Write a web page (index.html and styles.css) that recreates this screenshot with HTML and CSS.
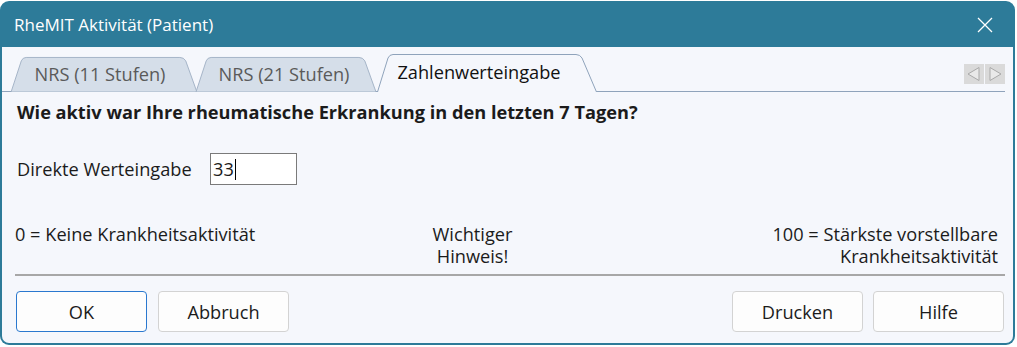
FILE: index.html
```html
<html>
  <head>
    <meta charset="utf-8" />
    <link rel="stylesheet" href="styles.css">
  </head>
  <body>
    <div class="window">
      <div class="titlebar">
        <span class="title">RheMIT Aktivität (Patient)</span>
        <svg class="close" width="16" height="16" viewBox="0 0 16 16">
          <path d="M1 1 L15 15 M15 1 L1 15" stroke="#ffffff" stroke-width="1.3" fill="none" />
        </svg>
      </div>
      <div class="client">
        <div class="tabstrip">
          <div class="tab tab-first">NRS (11 Stufen)</div>
          <div class="tab tab-second">NRS (21 Stufen)</div>
          <div class="tab tab-active">Zahlenwerteingabe</div>
          <div class="scrollers">
            <span class="scroll-btn">
              <svg width="20" height="20" viewBox="0 0 20 20">
                <path d="M15 3.5 L15 16.5 L4 10 Z" fill="#e9e9e9" stroke="#a9a9a9" stroke-width="1" />
              </svg>
            </span>
            <span class="scroll-btn">
              <svg width="20" height="20" viewBox="0 0 20 20">
                <path d="M5 3.5 L5 16.5 L16 10 Z" fill="#e9e9e9" stroke="#a9a9a9" stroke-width="1" />
              </svg>
            </span>
          </div>
        </div>

        <div class="question">Wie aktiv war Ihre rheumatische Erkrankung in den letzten 7 Tagen?</div>

        <div class="field-row">
          <span class="field-label">Direkte Werteingabe</span>
          <div class="field-box">33<span class="caret"></span></div>
        </div>

        <div class="scale">
          <div class="scale-min">0 = Keine Krankheitsaktivität</div>
          <div class="scale-note">Wichtiger<br />Hinweis!</div>
          <div class="scale-max">100 = Stärkste vorstellbare<br />Krankheitsaktivität</div>
        </div>

        <div class="separator"></div>

        <div class="buttons">
          <div class="left-buttons">
            <button class="btn btn-default">OK</button>
            <button class="btn">Abbruch</button>
          </div>
          <div class="right-buttons">
            <button class="btn">Drucken</button>
            <button class="btn">Hilfe</button>
          </div>
        </div>
      </div>
    </div>
  </body>
</html>
```

FILE: styles.css
```css
* {
  box-sizing: border-box;
}
body {
  margin: 0;
  background-color: #ffffff;
  font-family: "Open Sans", "Noto Sans", sans-serif;
  font-size: 18.2px;
  color: #1b1b1b;
}
.window {
  width: 1015px;
  height: 344px;
  margin-top: 1px;
  background-color: #2d7b99;
  border-radius: 9px;
  padding: 0 2px 2px 2px;
  display: flex;
  flex-direction: column;
}
.titlebar {
  height: 46px;
  display: flex;
  align-items: center;
  padding-left: 12px;
  padding-right: 20px;
  color: #ffffff;
}
.title {
  font-size: 17px;
  flex: 1;
}
.close {
  margin-top: 1px;
}
.client {
  flex: 1;
  background-color: #f5f7fc;
  border-radius: 0 0 7px 7px;
  display: flex;
  flex-direction: column;
}

/* tabs */
.tabstrip {
  margin-top: 6px;
  height: 39px;
  margin-right: 8px;
  display: flex;
  align-items: flex-end;
  border-bottom: 1px solid #8fa3bb;
  padding-left: 6px;
}
.tab {
  height: 36px;
  display: flex;
  align-items: center;
  justify-content: center;
  color: #5a5a5a;
  background-size: 100% 100%;
  background-repeat: no-repeat;
  margin-bottom: -1px;
}
.tab-first {
  width: 192px;
  background-image: url("data:image/svg+xml;utf8,<svg xmlns='http://www.w3.org/2000/svg' width='192' height='37' viewBox='0 0 192 37'><path d='M0.5 37 L11 5 Q12.5 1.5 16 1.5 L174 1.5 Q178 1.5 180 5 L191.5 37 Z' fill='%23d5dee9' stroke='%23a3b3c6' stroke-width='1'/></svg>");
  padding-right: 8px;
}
.tab-second {
  width: 186px;
  margin-left: -7px;
  background-image: url("data:image/svg+xml;utf8,<svg xmlns='http://www.w3.org/2000/svg' width='186' height='37' viewBox='0 0 186 37'><path d='M0.5 37 L11 5 Q12.5 1.5 16 1.5 L168 1.5 Q172 1.5 174 5 L185.5 37 Z' fill='%23d5dee9' stroke='%23a3b3c6' stroke-width='1'/></svg>");
  padding-right: 4px;
}
.tab-active {
  width: 220px;
  height: 39px;
  margin-left: -2px;
  color: #111111;
  background-image: url("data:image/svg+xml;utf8,<svg xmlns='http://www.w3.org/2000/svg' width='220' height='39' viewBox='0 0 220 39'><path d='M0.5 39 L11 5 Q12.5 1.5 16 1.5 L199 1.5 Q203 1.5 205 5 L219.5 39' fill='%23f5f7fc' stroke='%238fa3bb' stroke-width='1'/></svg>");
  padding-right: 16px;
  padding-bottom: 2px;
}
.scrollers {
  margin-left: auto;
  align-self: center;
  display: flex;
  gap: 1px;
  margin-top: 3px;
}
.scroll-btn {
  width: 20px;
  height: 20px;
  background-color: #dadada;
  display: block;
}
.scroll-btn svg {
  display: block;
}

/* body content */
.question {
  font-weight: bold;
  padding-left: 15px;
  margin-top: 10px;
  line-height: 20px;
}
.field-row {
  display: flex;
  align-items: center;
  padding-left: 15px;
  margin-top: 31px;
}
.field-label {
  width: 193px;
}
.field-box {
  width: 87px;
  height: 32px;
  border: 1px solid #7a7a7a;
  background-color: #ffffff;
  display: flex;
  align-items: center;
  padding-left: 2px;
}
.caret {
  width: 1px;
  height: 21px;
  background-color: #000000;
  margin-left: 1px;
}
.scale {
  display: grid;
  grid-template-columns: 415px 85px 1fr;
  margin-top: 38px;
  padding-left: 13px;
  padding-right: 15px;
  line-height: 22px;
}
.scale-note {
  text-align: center;
}
.scale-max {
  text-align: right;
}
.separator {
  margin: 7px 8px 0 13px;
  height: 2px;
  background-color: #a7a7a7;
}
.buttons {
  display: flex;
  justify-content: space-between;
  padding: 0 9px 0 14px;
  margin-top: 15px;
}
.left-buttons {
  display: flex;
  gap: 11px;
}
.right-buttons {
  display: flex;
  gap: 10px;
}
.btn {
  width: 131px;
  height: 41px;
  border: 1px solid #d3d3d3;
  border-radius: 4px;
  background-color: #fdfdfd;
  font-family: "Open Sans", "Noto Sans", sans-serif;
  font-size: 18.2px;
  color: #1b1b1b;
}
.btn-default {
  border-color: #2a78cf;
}
```
